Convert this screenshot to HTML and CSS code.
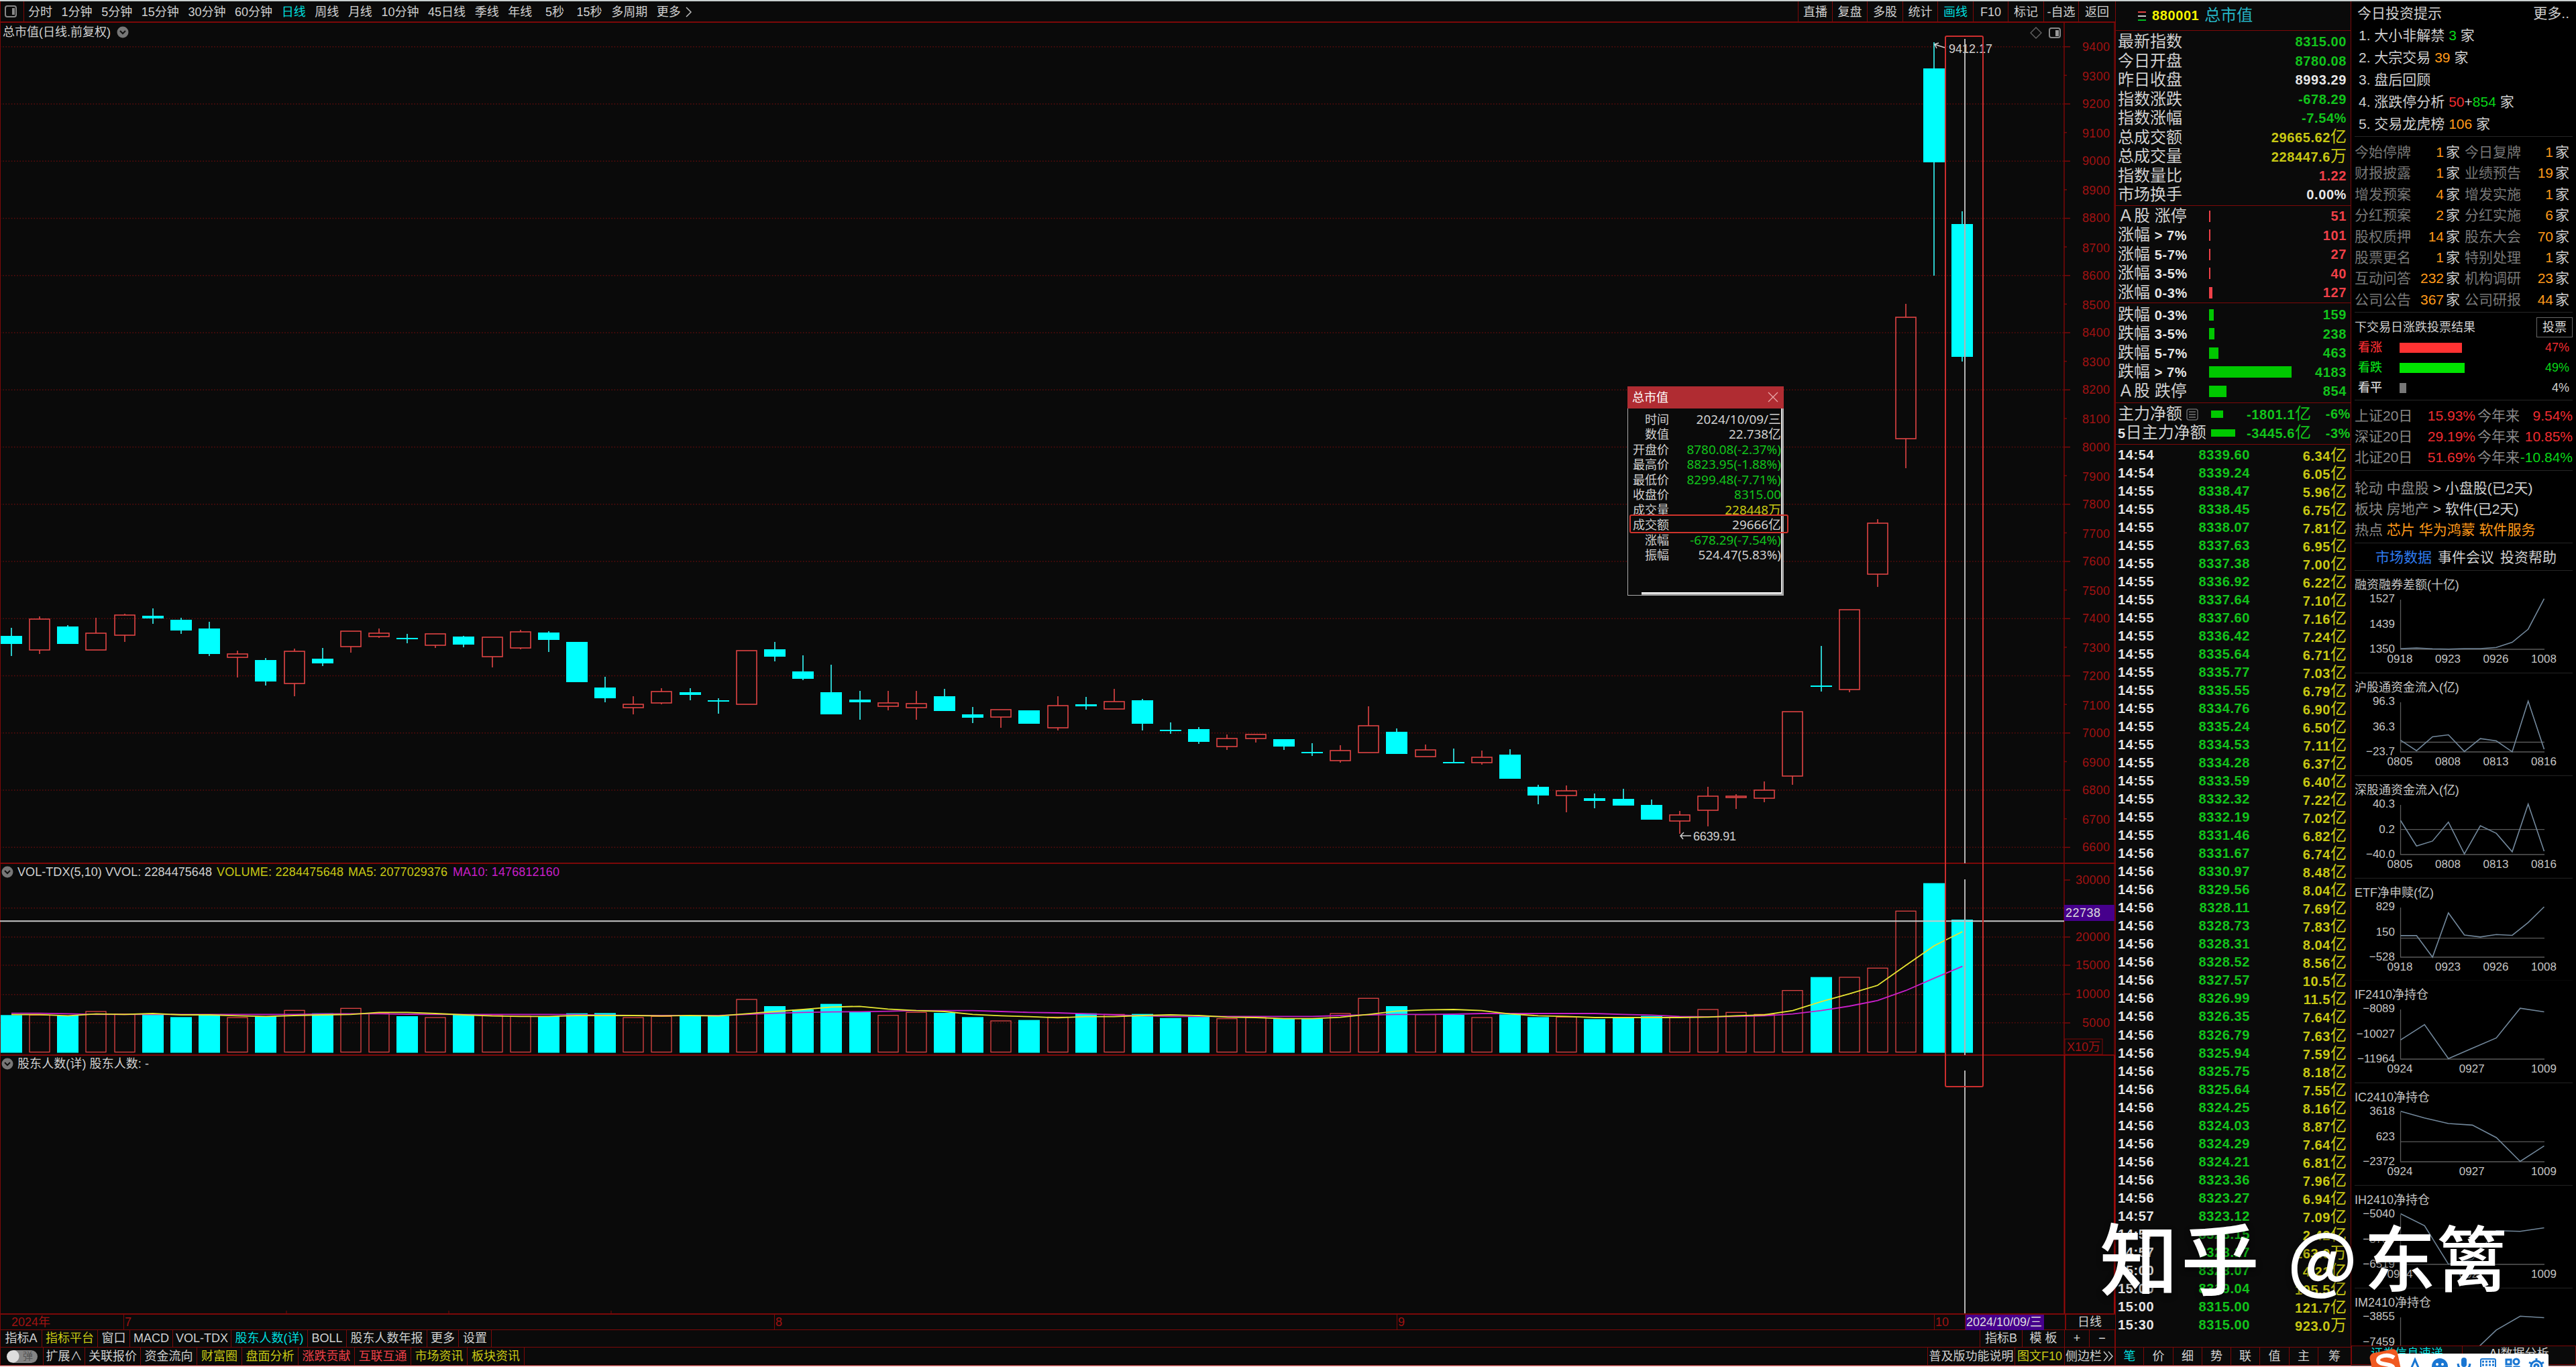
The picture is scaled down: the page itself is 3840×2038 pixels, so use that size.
FILE: index.html
```html
<!DOCTYPE html>
<html lang="zh-CN">
<head>
<meta charset="utf-8">
<title>总市值 880001</title>
<link rel="stylesheet" href="styles.css">
</head>
<body>
<div class="app">

  <div class="left">
    <div class="toolbar">
      <div class="tb-icon"><svg width="20" height="20"><rect x="2" y="2" width="16" height="16" rx="3" fill="none" stroke="#888" stroke-width="2"/><rect x="12" y="5" width="4" height="10" fill="#888"/></svg></div>
      <div class="periods">
        <span>分时</span><span>1分钟</span><span>5分钟</span><span>15分钟</span><span>30分钟</span><span>60分钟</span><span class="on">日线</span><span>周线</span><span>月线</span><span>10分钟</span><span>45日线</span><span>季线</span><span>年线</span><span class="sec">5秒</span><span class="sec2">15秒</span><span>多周期</span><span>更多<svg class="arr" width="12" height="18"><path d="M2 2L9 9L2 16" fill="none" stroke="#bbb" stroke-width="1.5"/></svg></span>
      </div>
      <div class="tools">
        <span>直播</span><span>复盘</span><span>多股</span><span>统计</span><span class="on">画线</span><span>F10</span><span>标记</span><span>-自选</span><span>返回</span>
      </div>
    </div>

    <div class="chart">
      <svg id="chart" width="3153" height="1924" viewBox="0 34 3153 1924"></svg>
      <div class="tip">
        <div class="tip-head"><span>总市值</span><svg width="16" height="16"><path d="M1 1L15 15M15 1L1 15" stroke="#e8a8a8" stroke-width="1.3"/></svg></div>
        <div class="tip-body">
          <div><b>时间</b><i>2024/10/09/三</i></div>
          <div><b>数值</b><i>22.738亿</i></div>
          <div><b>开盘价</b><i class="g">8780.08(-2.37%)</i></div>
          <div><b>最高价</b><i class="g">8823.95(-1.88%)</i></div>
          <div><b>最低价</b><i class="g">8299.48(-7.71%)</i></div>
          <div><b>收盘价</b><i class="g">8315.00</i></div>
          <div><b>成交量</b><i class="y">228448万</i></div>
          <div><b>成交额</b><i>29666亿</i></div>
          <div><b>涨幅</b><i class="g">-678.29(-7.54%)</i></div>
          <div><b>振幅</b><i>524.47(5.83%)</i></div>
        </div>
        <div class="tip-mark"></div>
      </div>
    </div>

    <div class="axis">
      <span>2024年</span><span>7</span><span>8</span><span>9</span><span>10</span><span class="cur">2024/10/09/三</span><span class="per">日线</span>
    </div>
    <div class="tabs">
      <span>指标A</span><span class="y">指标平台</span><span>窗口</span><span>MACD</span><span>VOL-TDX</span><span class="on">股东人数(详)</span><span>BOLL</span><span>股东人数年报</span><span>更多</span><span>设置</span><span></span><span>指标B</span><span>模 板</span><span>+</span><span>−</span>
    </div>
    <div class="tabs2">
      <span><em class="switch">弹</em></span><span>扩展∧</span><span>关联报价</span><span>资金流向</span><span class="y">财富圈</span><span class="y">盘面分析</span><span class="r">涨跌贡献</span><span class="r">互联互通</span><span class="y">市场资讯</span><span class="y">板块资讯</span><span></span><span>普及版功能说明</span><span class="y">图文F10</span><span class="side">侧边栏<svg width="16" height="16"><path d="M1 1L7 8L1 15M8 1L14 8L8 15" fill="none" stroke="#ccc" stroke-width="1.4"/></svg></span>
    </div>
  </div>

  <div class="quote">
    <div class="q-head">
      <svg width="12" height="18"><path d="M0 3H12" stroke="#e04040" stroke-width="2"/><path d="M0 9H12" stroke="#ccc" stroke-width="2"/><path d="M0 15H12" stroke="#00c020" stroke-width="2"/></svg>
      <b>880001</b><span>总市值</span>
    </div>
    <div class="q-list">
      <div><span>最新指数</span><b class="g">8315.00</b></div>
      <div><span>今日开盘</span><b class="g">8780.08</b></div>
      <div><span>昨日收盘</span><b>8993.29</b></div>
      <div><span>指数涨跌</span><b class="g">-678.29</b></div>
      <div><span>指数涨幅</span><b class="g">-7.54%</b></div>
      <div><span>总成交额</span><b class="y">29665.62<u>亿</u></b></div>
      <div><span>总成交量</span><b class="y">228447.6<u>万</u></b></div>
      <div><span>指数量比</span><b class="r">1.22</b></div>
      <div><span>市场换手</span><b>0.00%</b></div>
    </div>
    <div class="q-list q-up">
      <div><span>Ａ股 涨停</span><i class="w51"></i><b class="r">51</b></div>
      <div><span>涨幅 <b>&gt; 7%</b></span><i class="w51"></i><b class="r">101</b></div>
      <div><span>涨幅 <b>5-7%</b></span><i class="w51"></i><b class="r">27</b></div>
      <div><span>涨幅 <b>3-5%</b></span><i class="w51"></i><b class="r">40</b></div>
      <div><span>涨幅 <b>0-3%</b></span><i class="w127"></i><b class="r">127</b></div>
    </div>
    <div class="q-list q-down">
      <div><span>跌幅 <b>0-3%</b></span><i class="w159"></i><b class="g">159</b></div>
      <div><span>跌幅 <b>3-5%</b></span><i class="w238"></i><b class="g">238</b></div>
      <div><span>跌幅 <b>5-7%</b></span><i class="w463"></i><b class="g">463</b></div>
      <div><span>跌幅 <b>&gt; 7%</b></span><i class="w4183"></i><b class="g">4183</b></div>
      <div><span>Ａ股 跌停</span><i class="w854"></i><b class="g">854</b></div>
    </div>
    <div class="q-flow">
      <div><span>主力净额<svg width="18" height="18"><rect x="1" y="1" width="16" height="16" rx="3" fill="none" stroke="#666" stroke-width="1.5"/><path d="M4 5H14M4 9H14M4 13H14" stroke="#777" stroke-width="1.5"/></svg></span><i class="w18"></i><b>-1801.1<u>亿</u></b><b>-6%</b></div>
      <div><span><b>5</b>日主力净额</span><i class="w36"></i><b>-3445.6<u>亿</u></b><b>-3%</b></div>
    </div>
    <div class="ticks" id="ticks"></div>
    <div class="q-tabs">
      <span class="on">笔</span><span>价</span><span>细</span><span>势</span><span>联</span><span>值</span><span>主</span><span>筹</span>
    </div>
  </div>

  <div class="info">
    <div class="tips">
      <div class="t-head"><span>今日投资提示</span><span>更多..</span></div>
      <div>1. 大小非解禁 <b class="g">3</b> 家</div>
      <div>2. 大宗交易 <b class="o">39</b> 家</div>
      <div>3. 盘后回顾</div>
      <div>4. 涨跌停分析 <b class="r">50</b>+<b class="g">854</b> 家</div>
      <div>5. 交易龙虎榜 <b class="o">106</b> 家</div>
    </div>
    <div class="stats">
      <span>今始停牌</span><b>1</b><u>家</u><span>今日复牌</span><b>1</b><u>家</u>
      <span>财报披露</span><b>1</b><u>家</u><span>业绩预告</span><b>19</b><u>家</u>
      <span>增发预案</span><b>4</b><u>家</u><span>增发实施</span><b>1</b><u>家</u>
      <span>分红预案</span><b>2</b><u>家</u><span>分红实施</span><b>6</b><u>家</u>
      <span>股权质押</span><b>14</b><u>家</u><span>股东大会</span><b>70</b><u>家</u>
      <span>股票更名</span><b>1</b><u>家</u><span>特别处理</span><b>1</b><u>家</u>
      <span>互动问答</span><b>232</b><u>家</u><span>机构调研</span><b>23</b><u>家</u>
      <span>公司公告</span><b>367</b><u>家</u><span>公司研报</span><b>44</b><u>家</u>
    </div>
    <div class="vote">
      <div class="v-head"><span>下交易日涨跌投票结果</span><button>投票</button></div>
      <div class="r"><span>看涨</span><i class="v47"></i><b>47%</b></div>
      <div class="g"><span>看跌</span><i class="v49"></i><b>49%</b></div>
      <div><span>看平</span><i class="v4"></i><b>4%</b></div>
    </div>
    <div class="perf">
      <span>上证20日</span><b class="r">15.93%</b><span>今年来</span><b class="r">9.54%</b>
      <span>深证20日</span><b class="r">29.19%</b><span>今年来</span><b class="r">10.85%</b>
      <span>北证20日</span><b class="r">51.69%</b><span>今年来</span><b class="g">-10.84%</b>
    </div>
    <div class="hot">
      <div><s>轮动 中盘股</s> &gt; 小盘股(已2天)</div>
      <div><s>板块 房地产</s> &gt; 软件(已2天)</div>
      <div><s>热点</s> <em>芯片 华为鸿蒙 软件服务</em></div>
    </div>
    <div class="i-tabs"><span class="on">市场数据</span><span>事件会议</span><span>投资帮助</span></div>
    <div class="minis" id="minis"></div>
    <div class="i-foot"><span class="on">证券信息速递</span><span>AI数据分析</span></div>
  </div>
</div>

<div class="ime">
  <svg width="270" height="38" viewBox="0 0 270 38">
    <rect x="5" y="8" width="262" height="34" rx="3" fill="#fff"/>
    <rect x="3" y="4" width="42" height="42" rx="7" fill="#f05a22" transform="rotate(-12 24 24)"/>
    <path d="M37 14C28 8 13 11 13 18C14 26 35 22 36 30" fill="none" stroke="#fff" stroke-width="6"/>
    <g fill="none" stroke="#1976d2" stroke-width="3">
      <path d="M59 38L68 17L77 38M62 31H74"/>
      <path d="M168 20h18M168 25h18" stroke-dasharray="3 2"/>
      <rect x="166" y="16" width="22" height="20" rx="2" stroke-width="2"/>
      <rect x="204" y="17" width="7" height="7"/><rect x="204" y="28" width="7" height="7"/><rect x="216" y="28" width="7" height="7"/><circle cx="219" cy="20" r="4"/>
      <circle cx="249" cy="27" r="8"/><circle cx="249" cy="27" r="3"/>
      <path d="M249 15V19M238 21L242 23M260 21L256 23"/>
    </g>
    <circle cx="105" cy="27" r="12" fill="#1976d2"/><circle cx="101" cy="24" r="2" fill="#fff"/><circle cx="109" cy="24" r="2" fill="#fff"/><path d="M99 29Q105 36 111 29" stroke="#fff" stroke-width="2" fill="none"/>
    <rect x="137" y="14" width="8" height="14" rx="4" fill="#1976d2"/><path d="M132 23Q133 32 141 32Q149 32 150 23M141 32V38" fill="none" stroke="#1976d2" stroke-width="3"/>
  </svg>
</div>
<div class="mark"><b>知乎</b><span>@</span><span>东篱</span></div>

<script src="chart.js"></script>
</body>
</html>
```
FILE: styles.css
```css
* { box-sizing: border-box; }
body {
  margin: 0; width: 3840px; height: 2038px; overflow: hidden;
  background: #0a0a0a; color: #d0d0d0;
  font: 18px/24px "Liberation Sans", "Noto Sans CJK SC", sans-serif;
  white-space: nowrap;
}
i, em { font-style: normal; }
u, s { text-decoration: none; }
.app { display: flex; height: 2038px; border-top: 2px solid #c9cfcf; border-bottom: 2px solid #f0d0d0; }
.on { color: #00dede !important; }
.g { color: #12c41c !important; }
.r { color: #f04048 !important; }
.y { color: #c8c814 !important; }
.o { color: #ff9a1a !important; }

/* left side */
.left { width: 3153px; border-left: 1px solid #7c0808; }
.toolbar { display: flex; height: 32px; border-bottom: 2px solid #7c0808; }
.tb-icon { width: 35px; padding: 5px 0 0 5px; border-right: 1px solid #7c0808; }
.periods { flex: 1; display: flex; gap: 13.6px; padding: 4px 0 0 6px; }
.periods .sec { margin: 0 5px 0 6px; }
.arr { margin-left: 6px; vertical-align: -3px; }
.tools { display: grid; grid-template-columns: 51px 52px 53px 52px 53px 52px 53px 52px 55px; }
.tools span { border-left: 1px solid #7c0808; text-align: center; padding-top: 4px; }

.chart { position: relative; height: 1924px; }
.chart svg { display: block; }
.chart text { dominant-baseline: central; }
#chart { margin-left: -1px; }

.tip {
  position: absolute; left: 2425px; top: 542px; width: 233px; height: 312px;
  background: #0a0a0a; border: 1px solid #aaa; border-width: 0 3px 3px 1px;
  font-family: "Noto Sans", "Noto Sans CJK SC", sans-serif;
}
.tip::after { content: ""; position: absolute; left: 0; bottom: -2px; width: 20px; height: 5px; background: #0a0a0a; }
.tip-head { display: flex; justify-content: space-between; align-items: center; height: 33px; margin: 0 -3px 0 -1px; padding: 0 8px 2px 7px; background: #b02c32; color: #fff; }
.tip-body { height: 276px; padding: 5px 0 0 6px; border-right: 1px solid #fff; border-bottom: 2px solid #fff; }
.tip-body div { display: flex; justify-content: space-between; height: 22.45px; line-height: 22.45px; }
.tip-body b { width: 55px; font-weight: 400; text-align: right; }
.tip-body i { font-size: 18.9px; }
.tip-mark { position: absolute; left: 2px; top: 191px; width: 237px; height: 28px; border: 2px solid #d0342c; border-radius: 3px; }

.axis { display: grid; grid-template-columns: 183px 970px 928px 801px 46px 149px 76px; height: 24px; border-top: 2px solid #7c0808; color: #a01212; line-height: 23px; }
.axis span { border-left: 1px solid #7c0808; padding-left: 1px; }
.axis span:first-child { padding-left: 16px; border: 0; }
.axis .cur { width: 118px; padding-left: 1px; background: #46008c; color: #ddd; }
.axis .per { color: #d0d0d0; padding-left: 17px; border-left: 2px solid #7c0808; }
.tabs, .tabs2 { display: grid; border-top: 1px solid #7c0808; text-align: center; }
.tabs { height: 26px; line-height: 25px; grid-template-columns: 62px 83px 48px 64px 87px 114px 58px 120px 47px 49px 2219px 63px 63px 37px 38px; }
.tabs2 { height: 28px; line-height: 27px; border-bottom: 1px solid #7c0808; grid-template-columns: 64px 62px 83px 84px 67px 84px 84px 84px 84px 85px 2092px 130px 74px 75px; }
.tabs span, .tabs2 span { border-right: 1px solid #7c0808; min-width: 0; overflow: hidden; }
.side svg { margin-left: 2px; vertical-align: -2px; }
.switch { display: block; margin: 4px 0 0 9px; width: 46px; height: 19px; border-radius: 10px; color: #555; font-size: 15px; line-height: 18px; text-align: right; padding-right: 7px; background: radial-gradient(circle at 9px 9px, #ddd 9px, #858585 10px); }

/* quote panel */
.quote { width: 352px; border: 1px solid #7c0808; border-width: 0 1px; font-size: 24px; line-height: 28.5px; display: flex; flex-direction: column; }
.quote b { font-size: 20px; letter-spacing: .6px; color: #e6e6e6; }
.quote u { font-size: 24px; font-weight: 400; letter-spacing: 0; }
.q-head { display: flex; align-items: center; height: 43px; padding-left: 33px; }
.q-head b { color: #f4f400; margin: 0 8px 0 9px; }
.q-head span { color: #25b4c4; }
.q-list { border-top: 1px solid #7c0808; padding: 2px 6px 0 3px; height: 261px; }
.q-list div, .q-flow div { display: flex; height: 28.5px; align-items: center; justify-content: space-between; }
.q-up { height: 145px; padding-top: 1px; }
.q-down { height: 149px; padding-top: 3px; }
.q-up span, .q-down span { width: 136px; }
.q-list i { height: 17px; background: #00c800; margin-right: auto; }
.q-up i { background: #f04048; }
.w51 { width: 2px; } .w127 { width: 5px; } .w159 { width: 7px; } .w238 { width: 8px; }
.w463 { width: 14px; } .w4183 { width: 123px; } .w854 { width: 26px; }
.q-flow { height: 63px; border-top: 1px solid #7c0808; border-bottom: 1px solid #7c0808; padding: 2px 0 0 3px; }
.q-flow div > span { width: 139px; }
.q-flow svg { margin-left: 6px; vertical-align: -2px; }
.q-flow i { height: 11px; background: #00c800; margin-right: auto; }
.q-flow div > b { color: #12c41c; }
.q-flow div > b:last-child { width: 59px; text-align: right; }
.w18 { width: 18px; } .w36 { width: 36px; }
.ticks { flex: 1; padding: 2px 6px 0 3px; }
.ticks div { display: grid; grid-template-columns: 60px 137px 1fr; height: 27.02px; line-height: 27.02px; }
.ticks b:nth-child(n+2) { text-align: right; }
.q-tabs { display: grid; grid-template-columns: 42px 44px 43px 43px 43px 44px 43px 1fr; height: 28px; border: 1px solid #7c0808; border-width: 1px 0; font-size: 18px; line-height: 26px; text-align: center; }
.q-tabs span { border-right: 1px solid #7c0808; }
.q-tabs span:last-child { border: 0; }

/* info panel */
.info { width: 335px; background: #000; font-size: 21px; display: flex; flex-direction: column; }
.info > div { margin: 0 5px; }
.info b { font-weight: 400; }
.info .r { color: #f02c30 !important; }
.info .g { color: #08d818 !important; }
.tips { height: 202px; padding: 1px 0 0 6px; line-height: 33px; border-bottom: 1px solid #262626; }
.t-head { display: flex; justify-content: space-between; margin-left: -2px; padding-right: 5px; }
.stats { display: grid; grid-template-columns: 84px 49px 31px 84px 48px 1fr; height: 262px; padding-top: 7px; line-height: 31.4px; grid-auto-rows: 31.4px; color: #777; border-bottom: 1px solid #262626; }
.stats b { text-align: right; color: #ff9a1a; }
.stats u { padding-left: 3px; color: #ccc; }
.vote { height: 131px; border-bottom: 1px solid #262626; padding-top: 7px; font-size: 18px; }
.vote div { display: flex; align-items: center; height: 30px; }
.vote .v-head { justify-content: space-between; }
.vote button { width: 54px; height: 30px; padding: 0; border: 1px solid #666; background: #000; color: #ddd; font: inherit; }
.vote div:not(.v-head) span { width: 67px; padding-left: 5px; font-weight: 500; }
.vote b { margin-left: auto; padding-right: 5px; }
.vote i { height: 15px; background: #777; }
.vote .v47 { width: 93px; background: #ff3232; } .vote .v49 { width: 97px; background: #00e400; } .v4 { width: 10px; }
.perf { display: grid; grid-template-columns: 84px 96px 66px 1fr; grid-auto-rows: 31.2px; line-height: 31.2px; height: 105px; padding-top: 7px; color: #888; border-bottom: 1px solid #262626; }
.perf b { text-align: right; }
.perf span:nth-child(4n+3) { padding-left: 3px; }
.hot { height: 108px; padding-top: 10px; line-height: 31.2px; border-bottom: 1px solid #262626; }
.hot s { color: #888; }
.hot em { color: #ff9a1a; }
.i-tabs { display: flex; gap: 9px; padding: 9px 0 0 31px; height: 41px; border-bottom: 1px solid #262626; }
.i-tabs .on { color: #2f7cf0 !important; }
.minis { height: 1155px; overflow: hidden; }
.minis svg { display: block; height: 152.85px; width: 325px; }
.minis text { fill: #c4c4c4; dominant-baseline: central; font-size: 17px; }
.minis .tt { font-size: 18px; }
.i-foot { display: grid; grid-template-columns: 165px 1fr; height: 29px; border: 1px solid #7c0808; background: #0a0a0a; font-size: 18px; text-align: center; line-height: 22px; }
.info > .i-foot { margin: 0; }
.i-foot .on { border-right: 1px solid #7c0808; }

/* floating items */
.ime { position: absolute; left: 3532px; top: 2010px; height: 28px; overflow: hidden; }
.mark { position: absolute; left: 3130px; top: 1796px; display: flex; color: #fff; font: 500 107px/150px "Noto Sans CJK SC", sans-serif; text-shadow: 0 4px 8px rgba(0,0,0,.6); }
.mark b { font-size: 117px; letter-spacing: 4px; font-weight: 500; margin-right: 38px; }
.mark span + span { margin-left: 10px; letter-spacing: 1px; }
```
FILE: chart.js
```js
var CY = '#00ffff', RD = '#e04444', LINE = '#7c0808', AX = '#a01212';
var STEP = 42.15, X0 = 17, BW = 32;

// kind, body top, body bottom, high, low, volume top
var K = [
 ['c',948,960,936,978,700],['r',923,969,919,975,700],['c',934,960,932,960,702],['r',944,969,921,969,684],
 ['r',917,947,915,957,695],['c',918,922,907,930,697],['c',924,940,921,945,709],['c',937,975,927,978,700],
 ['r',975,980,970,1010,711],['c',984,1016,981,1022,706],['r',971,1019,967,1038,679],['c',982,989,966,993,692],
 ['r',941,964,941,973,670],['r',944,949,937,951,692],['c',951,952,945,959,705],['r',945,962,945,966,711],
 ['c',949,961,948,965,698],['r',950,979,950,995,702],['r',942,966,939,968,705],['c',943,954,941,972,706],
 ['c',957,1017,957,1017,692],['c',1025,1041,1009,1047,691],['r',1050,1055,1038,1065,711],['r',1031,1048,1026,1050,706],
 ['c',1032,1036,1026,1044,705],['c',1044,1045,1041,1064,704],['r',970,1050,970,1050,630],['c',968,979,957,986,660],
 ['c',1001,1012,977,1014,675],['c',1032,1065,991,1065,650],['c',1043,1047,1030,1073,685],['r',1048,1053,1030,1059,701],
 ['r',1049,1055,1030,1073,688],['c',1038,1060,1027,1060,690],['c',1065,1070,1054,1078,709],['r',1058,1069,1058,1085,726],
 ['c',1059,1079,1059,1079,722],['r',1052,1085,1038,1089,709],['c',1050,1053,1039,1058,692],['r',1046,1057,1027,1057,697],
 ['c',1044,1079,1042,1089,695],['c',1088,1089,1077,1094,713],['c',1087,1106,1084,1109,706],['r',1101,1113,1095,1118,716],
 ['r',1095,1101,1095,1107,711],['c',1102,1113,1102,1118,716],['c',1121,1122,1108,1127,716],['r',1119,1134,1111,1137,693],
 ['r',1082,1122,1053,1122,625],['c',1091,1124,1086,1124,660],['r',1118,1128,1110,1128,698],['c',1136,1137,1116,1138,699],
 ['r',1129,1137,1119,1140,711],['c',1125,1161,1117,1161,697],['c',1173,1186,1170,1199,709],['r',1179,1186,1171,1211,709],
 ['c',1190,1194,1183,1205,718],['c',1191,1201,1176,1201,709],['c',1200,1222,1192,1222,704],['r',1215,1224,1209,1243,709],
 ['r',1187,1208,1173,1232,675],['r',1187,1189,1184,1206,688],['r',1178,1190,1165,1196,697],['r',1061,1157,1061,1170,590],
 ['c',1022,1024,963,1031,530],['r',909,1028,909,1032,531],['r',780,856,774,875,490],['r',473,654,453,698,235],
 ['c',102,242,63,411,110],['c',334,532,315,539,273]
];
var MA5 = [698,698,703,695,697,693,699,699,703,706,702,699,697,688,688,693,699,704,706,706,702,702,702,704,702,704,694,684,675,664,661,673,680,684,697,703,707,712,707,707,702,699,702,709,711,716,716,710,697,682,677,675,680,695,703,706,711,711,711,711,709,703,699,680,640,605,567,478,390,327];
var MA10 = [692,692,694,697,697,697,697,697,697,697,697,695,694,694,696,697,697,697,697,697,698,700,702,702,702,702,697,692,688,686,685,683,680,680,680,684,688,690,694,699,703,706,706,706,706,706,706,702,699,697,697,696,693,693,693,693,693,697,700,706,708,706,703,695,680,660,635,590,535,482];

var out = [];
function line(x1, y1, x2, y2, c, w, dash) {
  out.push('<line x1="' + x1 + '" y1="' + y1 + '" x2="' + x2 + '" y2="' + y2 + '" stroke="' + c + '" stroke-width="' + (w || 1) + '"' + (dash ? ' stroke-dasharray="' + dash + '"' : '') + '/>');
}
function rect(x, y, w, h, fill, stroke, sw, rx) {
  out.push('<rect x="' + x + '" y="' + y + '" width="' + w + '" height="' + h + '" fill="' + fill + '" stroke="' + (stroke || 'none') + '" stroke-width="' + (sw || 1) + '" rx="' + (rx || 0) + '"/>');
}
function text(x, y, s, c, len) {
  out.push('<text x="' + x + '" y="' + y + '" fill="' + c + '"' + (len ? ' textLength="' + len + '"' : '') + '>' + s + '</text>');
}
function bullet(y, x) {
  out.push('<circle cx="' + x + '" cy="' + y + '" r="8.5" fill="#777"/><path d="M' + (x - 4) + ' ' + (y - 2) + 'l4 4l4-4" fill="none" stroke="#111" stroke-width="2"/>');
}

// price grid and scale
for (var p = 9400, y = 69.7; p >= 6600; p -= 100, y += 42.63) {
  var major = p % 200 == 0;
  if (major) line(0, y, 3077, y, '#5c0c0c', 1.5, '1.6 2.6');
  line(3077, y, major ? 3086 : 3081, y, LINE, 1.5);
  text(3104, y + (major ? 0 : 1.5), p, AX, 41);
}
[1353.7, 1397, 1439, 1482.7, 1524.7].forEach(function (y) { line(0, y, 3077, y, '#5c0c0c', 1.5, '1.6 2.6'); });
[[30000, 1312], [20000, 1397], [15000, 1439], [10000, 1482], [5000, 1525]].forEach(function (a) {
  text(a[0] < 10000 ? 3104 : 3094, a[1], a[0], AX, a[0] < 10000 ? 41 : 51);
  line(3077, a[1], 3086, a[1], LINE, 1.5);
});
line(3077, 34, 3077, 1573, LINE, 1.5);
line(3152, 34, 3152, 1573, LINE, 1.5);
line(0, 1287, 3153, 1287, LINE, 2);
line(0, 1573, 3153, 1573, LINE, 2);
line(3077.5, 1573, 3077.5, 1958, '#9c0a0a', 2);
line(3152, 1573, 3152, 1958, '#9c0a0a', 2);
rect(3078, 1549, 56, 23, 'none', LINE);
text(3081, 1561, 'X10万', AX, 50);

K.forEach(function (k, i) {
  var x = X0 + i * STEP, l = Math.round(x - BW / 2), c = k[0] == 'c' ? CY : RD, cx = Math.round(x);
  var vt = 1280 + k[5] / 3;
  if (k[0] == 'c') {
    line(cx, k[3], cx, k[4], '#2ccaca', 2);
    rect(l, k[1], BW, Math.max(2, k[2] - k[1]), CY);
    rect(l, vt, BW, 1569.5 - vt, CY);
  } else {
    line(cx, k[3], cx, k[1], c, 1.6);
    line(cx, k[2], cx, k[4], c, 1.6);
    rect(l + 1, k[1], BW - 2, Math.max(1, k[2] - k[1]), 'none', c, 1.6);
    rect(l + 1, vt, BW - 2, 1568.5 - vt, 'none', c, 1.3);
  }
});
[[MA10, '#c81ec8'], [MA5, '#e6e632']].forEach(function (m) {
  var pts = m[0].map(function (v, i) { return (X0 + i * STEP).toFixed(1) + ',' + (1280 + v / 3).toFixed(1); });
  out.push('<polyline points="' + pts.join(' ') + '" fill="none" stroke="' + m[1] + '" stroke-width="1.8"/>');
});

// pane titles
text(4, 48, '总市值(日线.前复权)', '#d0d0d0', 161);
bullet(48, 183);
bullet(1300, 11);
text(26, 1300, 'VOL-TDX(5,10) VVOL: 2284475648', '#d0d0d0', 290);
text(323, 1300, 'VOLUME: 2284475648', '#c8c814', 189);
text(519, 1300, 'MA5: 2077029376', '#c8c814', 148);
text(675, 1300, 'MA10: 1476812160', '#c81ec8', 159);
bullet(1586, 11);
text(26, 1586, '股东人数(详) 股东人数: -', '#d0d0d0', 196);

out.push('<path d="M3035 41l8 8l-8 8l-8-8z" fill="none" stroke="#666" stroke-width="1.3"/>');
rect(3055, 42, 16, 14, 'none', '#888', 2, 3);
rect(3064, 45, 5, 9, '#999');

// extremes
text(2905, 73, '9412.17', '#d0d0d0', 65);
out.push('<path d="M2899 71L2885 66.5M2890 64L2884 66L2887 72" fill="none" stroke="#d0d0d0" stroke-width="1.5"/>');
text(2524, 1247, '6639.91', '#d0d0d0', 64);
out.push('<path d="M2521 1246H2505M2510 1241L2505 1246L2509 1251" fill="none" stroke="#d0d0d0" stroke-width="1.5"/>');

// crosshair
line(0, 1373.3, 3077, 1373.3, '#c8c8c8', 2);
line(2929, 58, 2929, 1287, '#b4b4b4', 2);
line(2929, 1311, 2929, 1573, '#b4b4b4', 2);
line(2929, 1596, 2929, 1958, '#b4b4b4', 2);
rect(3077, 1349, 75, 24, '#46008c');
text(3079, 1361, '22738', '#ddd', 52);
rect(2900, 54, 56, 1566, 'none', '#cc2e2e', 2, 2);

// week ticks above the date axis
[427, 669, 911].forEach(function (x) { line(x, 1954, x, 1958, LINE); });
document.getElementById('chart').innerHTML = out.join('');

// time, price, amount
var T = '14:54 8339.60 6.34|14:54 8339.24 6.05|14:55 8338.47 5.96|14:55 8338.45 6.75|14:55 8338.07 7.81|14:55 8337.63 6.95|14:55 8337.38 7.00|14:55 8336.92 6.22|14:55 8337.64 7.10|14:55 8337.60 7.16|14:55 8336.42 7.24|14:55 8335.64 6.71|14:55 8335.77 7.03|14:55 8335.55 6.79|14:55 8334.76 6.90|14:55 8335.24 6.50|14:55 8334.53 7.11|14:55 8334.28 6.37|14:55 8333.59 6.40|14:55 8332.32 7.22|14:55 8332.19 7.02|14:55 8331.46 6.82|14:56 8331.67 6.74|14:56 8330.97 8.48|14:56 8329.56 8.04|14:56 8328.11 7.69|14:56 8328.73 7.83|14:56 8328.31 8.04|14:56 8328.52 8.56|14:56 8327.57 10.5|14:56 8326.99 11.5|14:56 8326.35 7.64|14:56 8326.79 7.63|14:56 8325.94 7.59|14:56 8325.75 8.18|14:56 8325.64 7.55|14:56 8324.25 8.16|14:56 8324.03 8.87|14:56 8324.29 7.64|14:56 8324.21 6.81|14:56 8323.36 7.96|14:56 8323.27 6.94|14:57 8323.12 7.09|14:57 8323.15 2.42|14:57 8323.17 263.0万|15:00 8323.07 4.21|15:00 8319.04 105.5|15:00 8315.00 121.7|15:30 8315.00 923.0万';
document.getElementById('ticks').innerHTML = T.split('|').map(function (r) {
  var a = r.split(' '), unit = a[2].indexOf('万') > 0 ? '万' : '亿';
  return '<div><b>' + a[0] + '</b><b class="g">' + a[1] + '</b><b class="y">' + a[2].replace('万', '') + '<u>' + unit + '</u></b></div>';
}).join('');

// small charts: title, y labels, x labels, zero line, points
var M = [
 ['融资融券差额(十亿)', ['1527','1439','1350'], ['0918','0923','0926','1008'], 0, [116,115,116.3,116.7,116,116,114.3,106.5,87,41.7]],
 ['沪股通资金流入(亿)', ['96.3','36.3','-23.7'], ['0805','0808','0813','0816'], 102.5, [99.7,115.2,94.4,91.5,116.4,97.2,100.5,116.8,41.3,113.1]],
 ['深股通资金流入(亿)', ['40.3','0.2','-40.0'], ['0805','0808','0813','0816'], 79.7, [66.3,104.2,96.9,68.7,116,74,85.4,112.8,41.8,112]],
 ['ETF净申赎(亿)', ['829','150','-528'], ['0918','0923','0926','1008'], 88.6, [84.9,84.9,117.1,51,84,86.9,83.3,84.5,65.3,42]],
 ['IF2410净持仓', ['-8089','-10027','-11964'], ['0924','0927','1009'], 0, [88.4,65.6,116.3,100.7,85.4,41.2,46.5]],
 ['IC2410净持仓', ['3618','623','-2372'], ['0924','0927','1009'], 87.2, [41.8,51.7,60,62.4,81,116.5,93.3]],
 ['IH2410净持仓', ['-5040','-5780','-6519'], ['0924','0927','1009'], 0, [41.5,59.4,116.7,109.8,66.7,67.8,62.5]],
 ['IM2410净持仓', ['-3855','-7459'], [], 0, [112,105,116,96,61.8,41.2,43.5]]
];
document.getElementById('minis').innerHTML = M.map(function (m) {
  var s = '<svg viewBox="0 0 325 152.85"><text class="tt" x="0" y="21">' + m[0] + '</text>';
  m[1].forEach(function (t, i) { s += '<text x="60" y="' + (42 + i * 37.3) + '" text-anchor="end">' + t.replace('-', '−') + '</text>'; });
  m[2].forEach(function (t, i) { s += '<text x="' + (67.5 + i * 214.5 / (m[2].length - 1)) + '" y="132" text-anchor="middle">' + t + '</text>'; });
  s += '<path d="M68.5 43V117H283' + (m[3] ? 'M68.5 ' + m[3] + 'H283' : '') + '" fill="none" stroke="#5a5a5a" stroke-width="1.3"/>';
  var n = m[4].length - 1;
  s += '<polyline fill="none" stroke="#72889c" stroke-width="1.6" points="' + m[4].map(function (v, i) { return (68.5 + i * 214 / n).toFixed(1) + ',' + v; }).join(' ') + '"/>';
  return s + '<line x1="0" y1="152.3" x2="325" y2="152.3" stroke="#262626"/></svg>';
}).join('');
```
